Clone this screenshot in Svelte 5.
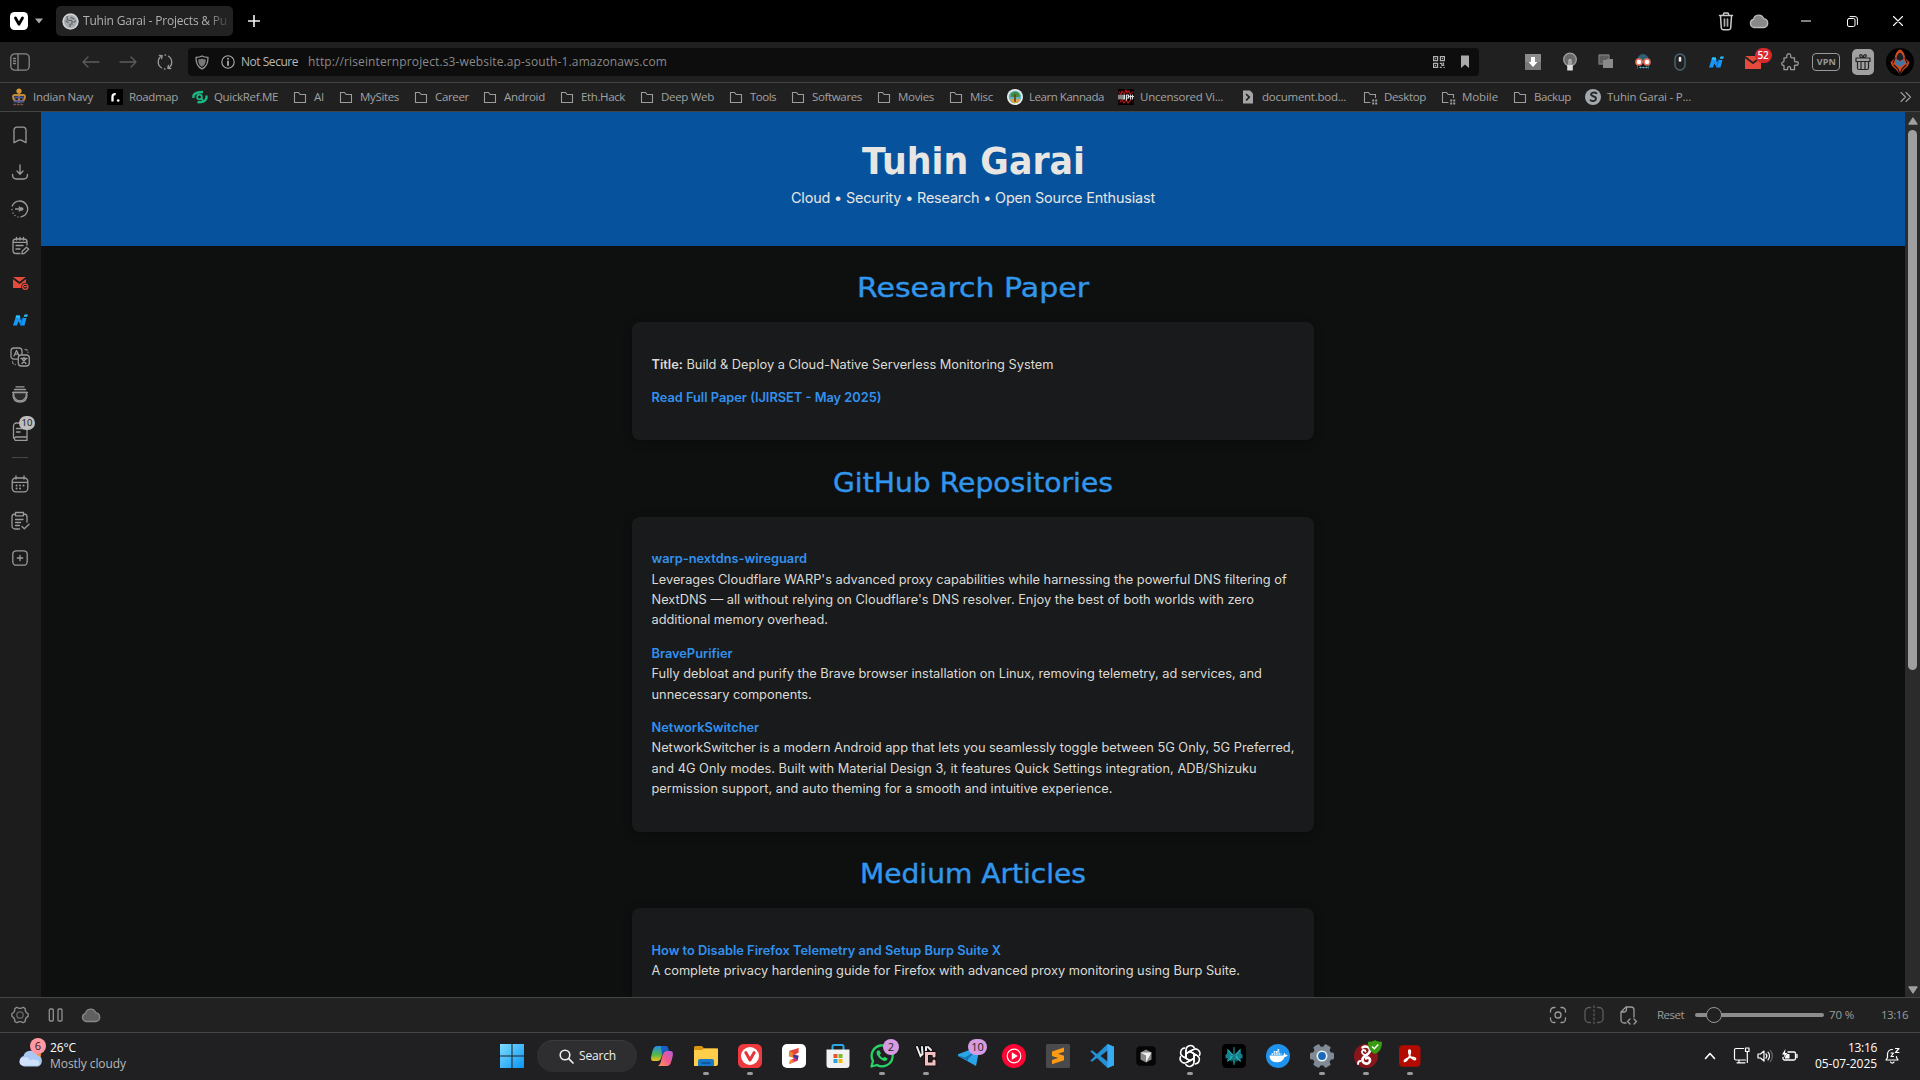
<script lang="ts">
  const svg = (w: number, h: number, body: string, extra = '') =>
    `<svg width="${w}" height="${h}" viewBox="0 0 ${w} ${h}" fill="none" stroke="currentColor" stroke-width="1.3" stroke-linecap="round" stroke-linejoin="round" style="display:block" ${extra}>${body}</svg>`;

  // Spreads a label over its given width by adjusting the tracking.
  function fit(node: HTMLElement, width: number) {
    const natural = node.getBoundingClientRect().width;
    const n = (node.textContent ?? '').length;
    node.style.letterSpacing = `${(width - natural) / n}px`;
  }

  const cloud = '<path d="M5 14.5a4.2 4.2 0 0 1-.4-8.2A5.2 5.2 0 0 1 14.6 5.6 4.5 4.5 0 0 1 15 14.5Z"';
  const swirl = '<circle cx="8" cy="8" r="8" fill="#a3a8ad" stroke="none"/><path d="M11.500 4.200C9.500 2.800 6 3.500 6 5.500s5 1.500 5 4-3.500 3.200-5.500 1.800" stroke="#26282a" stroke-width="1.900"/>';
  const folder = '<path d="M2.500 3.500h4l1.700 2h5.300v8h-11Z" stroke-width="1.1" stroke-linejoin="miter"/>';
  const speed = '<path d="M8 13.500H2.500v-10h4l1.700 2h5.300v3" stroke-width="1.1" stroke-linejoin="miter"/><path d="M10.200 10.500h2v2h-2zM13.200 10.500h2v2h-2zM10.200 13.500h2v2h-2zM13.200 13.500h2v2h-2z" fill="currentColor" stroke="none"/>';
  const nDefs = '<path d="M2 13.500 5.200 3.500h3.600l1 5L11.500 6h4l-2 7.500H9.500L7.500 9.300 6 13.500Z" fill="#1597f5" stroke="none"/><path d="M13.500 2.500h3.300l-.6 2.300h-3.400Z" fill="#27c4ff" stroke="none"/><path d="m12 5.500-2.600 8" stroke="#0d62c9" stroke-width=".9"/><path d="M5.200 3.500h3.600l.5 2.500-4.800-.6Z" fill="#27c4ff" stroke="none"/>';

  const ic: Record<string, string> = {
    vivaldi: svg(18, 18, '<rect width="18" height="18" rx="4.500" fill="#fff" stroke="none"/><path d="m5.500 6 3.400 6.200L12.500 6" stroke="#000" stroke-width="2.800"/>'),
    caret: svg(8, 6, '<path d="M0 .5h8L4 5.500Z" fill="#aaa" stroke="none"/>'),
    favicon: svg(17, 17, '<circle cx="8.500" cy="8.500" r="8.200" fill="#a7abb0" stroke="none"/><circle cx="8.500" cy="8.500" r="7.200" stroke="#d5d5d5"/><path d="M5 3.500C6 5 4 6 6 7s3-.5 4 1-1 2 0 3.500M4 8l2 1.500M9 4.500l3 1.500M12 9l1.500-1M8 11v2.500" stroke="#5c5f62" stroke-width="1.200"/>'),
    plus: svg(12, 12, '<path d="M6 .5v11M.5 6h11" stroke="#f5f5f5" stroke-width="1.600"/>'),
    trash: svg(16, 20, '<path d="M1.500 4.500h13M5.500 4.300V3a1 1 0 0 1 1-1h3a1 1 0 0 1 1 1v1.300M2.500 5l.8 12a2 2 0 0 0 2 1.800h5.400a2 2 0 0 0 2-1.800l.8-12" stroke="#ccc" stroke-width="1.500"/><path d="M6.500 8v7M9.500 8v7" stroke="#aaa" stroke-width="1.700"/>'),
    cloudTop: svg(20, 16, cloud + ' fill="#888" stroke="#bbb" stroke-width="1.400"/>'),
    min: svg(10, 2, '<path d="M0 1h10" stroke="#fff" stroke-width="1"/>'),
    restore: svg(11, 11, '<rect x=".5" y="2.500" width="7.500" height="8" rx="1.500" stroke="#fff" stroke-width="1"/><path d="M3 .6h5a2.400 2.400 0 0 1 2.400 2.400v5.500" stroke="#fff" stroke-width="1"/>'),
    close: svg(10, 10, '<path d="m.5.5 9 9m0-9-9 9" stroke="#fff" stroke-width="1.100"/>'),
    panel: svg(20, 18, '<rect x=".8" y=".8" width="18.400" height="16.400" rx="4"/><path d="M8 1v16M3.500 5.500h2M3.500 8h2M3.500 10.500h2"/>'),
    back: svg(18, 12, '<path d="M17 6H1m5-5L1 6l5 5"/>'),
    fwd: svg(18, 12, '<path d="M1 6h16m-5-5 5 5-5 5"/>'),
    reload: svg(18, 18, '<path d="M5.500 14.800A7 7 0 0 1 6 2.700M12.500 3.200A7 7 0 0 1 12 15.300M3.300 2.300 6.200 2.600 5.600 5.500M14.700 15.700l-2.900-.3.600-2.900M9 2h.6M8.400 16H9"/>'),
    shield: svg(14, 15, '<path d="M7 1c2 1.200 4 1.400 6 1.400 0 5.600-1 9-6 11.600C2 11.400 1 8 1 2.400c2 0 4-.2 6-1.400Z" stroke="#999"/><path d="M7 3.500c1.300.7 2.400.9 3.800.9C10.700 8 10 10 7 11.700 4 10 3.300 8 3.200 4.400c1.400 0 2.500-.2 3.800-.9Z" fill="#777" stroke="none"/>'),
    info: svg(14, 14, '<circle cx="7" cy="7" r="6.200" stroke="#aaa" stroke-width="1.100"/><path d="M7 6.300v4M7 3.600v.3" stroke="#ccc" stroke-width="1.500"/>'),
    qr: svg(12, 12, '<g stroke-width="1.200" stroke-linejoin="miter" stroke-linecap="butt"><path d="M.6.6h4v4h-4zM7.400.6h4v4h-4zM.6 7.400h4v4h-4z"/><path d="M2 2.600h1.200M8.800 2.600H10M2 9.400h1.200M6.800 7.400h2v2h2.500M6.800 11.400h2M10.500 6.500v2M10.500 11.500h1.300"/></g>'),
    saved: svg(10, 14, '<path d="M1 .5h8V13L5 9.500 1 13Z" fill="#aaa" stroke="none"/>'),
    dl: svg(16, 16, '<path d="M0 0h16v16H0z" fill="#777" stroke="none"/><path d="M0 0h16v8H0z" fill="#8b8b8b" stroke="none"/><path d="M6 3h4v5h2.500L8 13 3.500 8H6Z" fill="#fff" stroke="none"/>'),
    bulb: svg(16, 20, '<circle cx="8" cy="7.500" r="6.300" fill="#6a6a6a" stroke="#a0a0a0"/><path d="M5.200 13h5.600v5.500H5.200z" fill="#ddd" stroke="none"/><path d="M7 13V8.500a1 1 0 1 1 2 0V13" stroke="#ccc" stroke-width="1.100"/>'),
    tabs: svg(16, 16, '<path d="M1 1h10v9H1z" fill="#5c5c5c" stroke="#777"/><path d="M5 6h3l1-1h6v9H5z" fill="#8a8a8a" stroke="none"/>'),
    robot: svg(16, 18, '<path d="M2 8a6 7 0 0 1 12 0v8H2Z" fill="#2c6072" stroke="none"/><path d="M3 10h10v6H3z" fill="#101c22" stroke="none"/><circle cx="4" cy="9" r="3" fill="#fff" stroke="#ef7056" stroke-width="1.600"/><circle cx="12" cy="9" r="3" fill="#fff" stroke="#ef7056" stroke-width="1.600"/><path d="M5 14.500h1m2 0h1m2 0h1" stroke="#79b8c8"/>'),
    mouse: svg(12, 18, '<rect x="1" y="1" width="10" height="16" rx="5" stroke="#4a6674" stroke-width="1.400"/><path d="M6 5v2.500" stroke="#eee" stroke-width="2.600"/>'),
    n: svg(18, 16, nDefs),
    mail: svg(18, 15, '<path d="M1 1h16v13H1z" fill="#e54b3c" stroke="none"/><path d="m1 2 8 6 8-6" stroke="#222" stroke-width="1.800"/>'),
    puzzle: svg(20, 20, '<path d="M7.500 2.200c1.800-1.200 3.600.1 3.200 2.300-.2 1 .5 1.300 1.400 1.300h2.400v3c0 1 .6 1.300 1.500 1 2-.4 2.800 1 2 2.600-.6 1-1.400 1-2.400.7-.8-.2-1.100.2-1.100 1v3.600h-3c-.9 0-1-.5-.9-1.200.2-1.200-.4-1.900-1.500-1.900s-1.700.7-1.500 1.900c.1.7 0 1.200-.9 1.200H4v-3.500c0-.8-.4-1.100-1-.9-1.700-.3-1.800-2.800 0-3.200.7 0 1-.2 1-1V5.800h2c.9 0 1-.5.8-1.300-.2-1 0-1.700.7-2.300Z"/>'),
    gift: svg(22, 26, '<rect width="22" height="26" rx="5" fill="#a0a0a0" stroke="none"/><path d="M4 9h14v3.500H4zM5.500 12.500h11V19a1.500 1.500 0 0 1-1.500 1.500H7A1.500 1.500 0 0 1 5.500 19ZM9 12.500v8M13 12.500v8M11 8.500C8 8.500 7 7 8 6s2.500 0 3 2.500C11.500 6 13 5 14 6s0 2.500-3 2.500Z" stroke="#252525" stroke-width="1.200"/>'),
    avatar: svg(28, 28, '<circle cx="14" cy="14" r="14" fill="#000" stroke="none"/><path d="M14 1.500c3 1 5 5 5 8l4.500 5-2 4-3.500 3-4 5-4-5-3.500-3-2-4L9 9.500c0-3 2-7 5-8Z" fill="#d94a1f" stroke="none"/><path d="M14 4.500c2 1 3.500 3.500 3.500 6.500L14 13l-3.500-2c0-3 1.500-5.500 3.500-6.500Z" fill="#16232c" stroke="none"/><path d="m10 11.500 4 2 4-2 1 4-5 3.500-5-3.500Z" fill="#3e78a8" stroke="none"/><path d="m8 17 4 4 2 5 2-5 4-4M9 10l-2 5M19 10l2 5" stroke="#151515" stroke-width="1.200"/>'),
    navy: svg(16, 18, '<circle cx="8" cy="3" r="2.600" fill="#d99a32" stroke="none"/><path d="M3 7h10M2 8c0 4 3 5.500 6 5.500S14 12 14 8M8 5v9" stroke="#c28836" stroke-width="2"/><path d="M4 9.500h8M3.500 13.500h9" stroke="#4a57a3" stroke-width="1.800"/><path d="M3 16.500h10" stroke="#7d5348" stroke-width="1.500" stroke-dasharray="1.500 2"/>'),
    road: svg(16, 16, '<rect width="16" height="16" rx="1" fill="#000" stroke="none"/><path d="M5.500 12.500V7.800c0-2 1-2.800 3.200-2.600" stroke="#fff" stroke-width="2.300" stroke-linecap="butt"/><circle cx="11.200" cy="11.500" r="1.300" fill="#fff" stroke="none"/>'),
    quick: svg(16, 16, '<path d="M1.500 9V6.500C3 3.500 6 3 11 3M14.500 6.500V9c-1.500 4-4 4.300-9 4.300" stroke="#19b884" stroke-width="2.400" stroke-linecap="butt"/><circle cx="7.500" cy="8" r="2.400" stroke="#19b884" stroke-width="1.700"/><path d="m9 9.500 2 1.800" stroke="#19b884" stroke-width="1.700"/>'),
    folder: svg(16, 16, folder),
    speed: svg(16, 16, speed),
    kannada: svg(16, 16, '<circle cx="8" cy="8" r="8" fill="#eee" stroke="none"/><circle cx="8" cy="8" r="6.300" fill="#62b6c9" stroke="none"/><path d="M3 10h10c-1 3-2.500 4.200-5 4.200S4 13 3 10Z" fill="#d9a441" stroke="none"/><path d="M3.500 8C3 5 5 3 8 2.800S13 5 12.500 8Z" fill="#3f8f3a" stroke="none"/><path d="M8 6v6" stroke="#6d4426" stroke-width="1.800"/>'),
    uncensored: svg(16, 16, '<path d="M0 0h16v16H0z" fill="#0a0202" stroke="none"/><path d="m1 3 2 2 1-3 2 3 2-4 1 3 2-2 1 3 3-2M2 13l2-2 2 3 2-3 2 3 3-3" stroke="#b01414" stroke-width="1.200"/><path d="M1 6v4M3 10V6M5 6v4h1.500V6M8.500 11V6h2v3h-2M12.500 6v4M14.500 6v4M11.500 7.500h4" stroke="#ddd" stroke-width="1.200"/>'),
    doc: svg(16, 16, '<path d="M3 1.500h7l3 3v10H3Z" fill="#a5a5a5" stroke="none"/><path d="m6.500 5.500 2.800 2.700L6.500 11" stroke="#222" stroke-width="1.700"/>'),
    globe: svg(16, 16, swirl),
    more: svg(12, 12, '<path d="m1 1.500 4.500 4.500L1 10.500m5-9 4.500 4.500L6 10.500" stroke-width="1.100"/>'),
    s1: svg(18, 18, '<path d="M3 16.700V4a2.800 2.800 0 0 1 2.800-2.800h6.400A2.800 2.800 0 0 1 15 4v12.700l-4.300-2.300a3.500 3.500 0 0 0-3.400 0Z"/>'),
    s2: svg(18, 18, '<path d="M9 2v9M6 8l3 3.200L12 8M1.500 11.500c0 3 1.700 4.500 4 4.500h7c2.300 0 4-1.500 4-4.500"/>'),
    s3: svg(20, 20, '<path d="M2.200 7A8 8 0 1 1 11 17.900M2 10.500v.3M3 14v.3M5 16.300v.3M8 17.800v.2"/><path d="M5.500 10H11m-1.800-2L11.500 10l-2.300 2"/><circle cx="11.800" cy="10" r="1"/>'),
    s4: svg(20, 20, '<path d="M10 17.500H6A3 3 0 0 1 3 14.500V6a3 3 0 0 1 3-3h8a3 3 0 0 1 3 3v3M3 6.300h14M6.500 1.500V4M10 1.500V4M13.500 1.500V4M6 9.500h7M6 13h4M12 17.800l.3-2.500 4.200-4 2.200 2-4.200 4Z"/>'),
    s5: svg(20, 16, '<path d="M3 2h13v11H3z" fill="#e54b3c" stroke="none"/><path d="m3 3 6.500 5L16 3" stroke="#1c1c1c" stroke-width="1.600"/><circle cx="15.300" cy="11.700" r="4" fill="#1c1c1c" stroke="none"/><circle cx="15.300" cy="11.700" r="2.600" stroke="#e54b3c" stroke-width="1.200"/><path d="M14.300 11.700h2" stroke="#e54b3c"/>'),
    s7: svg(20, 20, '<path d="M8 12.200H4A3 3 0 0 1 1 9.200V4a3 3 0 0 1 3-3h5a3 3 0 0 1 3 3v3.500M4 9l2.500-5.500L9 8.500M5 7.200h3"/><rect x="8.300" y="8" width="11" height="11" rx="3"/><path d="M11 11.500h6M14 10.500v1M12 16.500l4-5M12.500 12.500l3.500 4"/><path d="M15 2.500c2 0 3 .8 3 3M2.500 14.500c0 2 1 3 3 3" stroke="#777" stroke-dasharray="2.500 2"/>'),
    s8: svg(18, 18, '<path d="M5 1.800h8M3.500 4.500h11M1.500 7.500h15M2 9.500c0 5 2.500 7.500 7 7.500s7-2.500 7-7.500" /><path d="M2.500 7.500h13c0 5-2 8.500-6.500 8.500s-6.500-3.500-6.500-8.500Z" fill="#2b2b2b"/>'),
    s9: svg(18, 20, '<path d="M16 16H4.500a2 2 0 0 0 0 3.500H16M2.500 17V5a3 3 0 0 1 3-3H14a2 2 0 0 1 2 2v15.500M5.500 7.500H12M5.500 11H9" />'),
    s10: svg(18, 18, '<rect x="1.200" y="3" width="15.600" height="13.800" rx="3.500"/><path d="M1.500 7.300h15M5 1v3M13 1v3"/><path d="M5.500 10.500h.1M9 10.500h.1M12.500 10.500h.1M5.500 13.500h.1M9 13.500h.1" stroke-width="1.800"/>'),
    s11: svg(20, 20, '<path d="M9.500 18H5a3 3 0 0 1-3-3V6a3 3 0 0 1 3-3M14 3a3 3 0 0 1 3 3v5M5.500 1.500h8v3.300h-8zM5.500 8.500H13M5.500 11.500h5M5.500 14.500h4M12 15.500l2.300 2.300 4.700-4.500"/>'),
    s12: svg(16, 16, '<rect x=".8" y=".8" width="14.400" height="14.400" rx="3.500"/><path d="M8 5.300v5.400M5.300 8h5.400"/>'),
    gear: svg(18, 18, '<path d="M5.800 1.300c2 1.400 4.400 1.400 6.400 0l2 1.300c-.2 2.400.6 4 2.900 5v2.800c-2.300 1-3.100 2.600-2.900 5l-2 1.300c-2-1.400-4.400-1.400-6.400 0l-2-1.300c.2-2.400-.6-4-2.900-5V7.600c2.300-1 3.100-2.600 2.900-5Z"/><circle cx="9" cy="9" r="3.200" stroke="#666"/>'),
    pause: svg(16, 14, '<rect x="1.300" y="1" width="4" height="12" rx="1"/><rect x="10" y="1" width="4" height="12" rx="1"/>'),
    cloudSt: svg(20, 16, cloud + ' fill="#606060" stroke="#888"/>'),
    capture: svg(18, 18, '<path d="M1.500 6V5A3.500 3.500 0 0 1 5 1.500h1M12 1.500h1A3.500 3.500 0 0 1 16.500 5v1M16.500 12v1a3.500 3.500 0 0 1-3.500 3.500h-1M6 16.500H5A3.500 3.500 0 0 1 1.500 13v-1"/><circle cx="9" cy="9" r="3"/>'),
    tile: svg(20, 20, '<path d="M6.500 2.500H5A4 4 0 0 0 1 6.500v7a4 4 0 0 0 4 4h1.500M13.500 2.500H15a4 4 0 0 1 4 4v7a4 4 0 0 1-4 4h-1.500"/><path d="M10 1v18" stroke-dasharray="1.500 2.500"/>'),
    actions: svg(18, 19, '<path d="M6 17H4a3 3 0 0 1-3-3V6l5-5h5a3 3 0 0 1 3 3v7M1.500 6H4a2.500 2.500 0 0 0 2.500-2.500V1M10 13l-2.500 2.500L10 18M14 13l2.500 2.500L14 18"/>'),
    win: svg(24, 24, '<defs><linearGradient id="w" x1="0" y1="0" x2="1" y2="1"><stop stop-color="#7ddcff"/><stop offset="1" stop-color="#0a95f5"/></linearGradient></defs><path d="M0 0h11.500v11.500H0zM12.500 0H24v11.500H12.500zM0 12.500h11.500V24H0zM12.500 12.500H24V24H12.500z" fill="url(#w)" stroke="none"/>'),
    search: svg(15, 15, '<circle cx="6" cy="6" r="4.800" stroke="#eee" stroke-width="1.600"/><path d="m9.700 9.700 4.300 4.300" stroke="#eee" stroke-width="1.700"/>'),
    copilot: svg(24, 24, '<defs><linearGradient id="c1" x1="0" y1="0" x2="0" y2="1"><stop stop-color="#1e8ee6"/><stop offset=".6" stop-color="#58b847"/><stop offset="1" stop-color="#f2c21a"/></linearGradient><linearGradient id="c2" x1="1" y1="0" x2="0" y2="1"><stop stop-color="#b55be0"/><stop offset=".5" stop-color="#ee5b8c"/><stop offset="1" stop-color="#ff9a55"/></linearGradient></defs><path d="M7 2h9c-2 1-2.500 3-3.500 7-1.200 5-2 8-5 8H4c-3 0-3.500-2-2.500-6C2.800 6 3.500 2 7 2Z" fill="url(#c1)" stroke="none"/><path d="M17 22H8c2-1 2.500-3 3.500-7 1.200-5 2-8 5-8H20c3 0 3.500 2 2.500 6-1.300 5-2 9-5.500 9Z" fill="url(#c2)" stroke="none"/><path d="M11 2h5c2 0 2.500 3 3 5h-3c-2 0-3 1-4 4Z" fill="#1660c8" stroke="none"/>'),
    explorer: svg(24, 24, '<path d="M0 3.500A1.500 1.500 0 0 1 1.500 2H8l2 2.500h12a2 2 0 0 1 2 2V12H0Z" fill="#d89510" stroke="none"/><path d="M0 6h8l2-1.500h14V20a2 2 0 0 1-2 2H0Z" fill="#ffce4a" stroke="none"/><path d="M4 22v-5a2 2 0 0 1 2-2h12a2 2 0 0 1 2 2v5Z" fill="#1a78c8" stroke="none"/><path d="M8 19h8" stroke="#0c4f92"/>'),
    viv2: svg(24, 24, '<rect width="24" height="24" rx="5.500" fill="#ee3a3e" stroke="none"/><circle cx="12" cy="12" r="9" fill="#fff" stroke="none"/><path d="m7.800 8.500 4.200 7.500 4.200-7.500" stroke="#e5343a" stroke-width="3"/>'),
    sapp: svg(24, 24, '<rect width="24" height="24" rx="5" fill="#fff" stroke="none"/><path d="m16.800 4-9.300 2.800-.7 3.700 5.200 1 4.500-3Z" fill="#e4473e" stroke="none"/><path d="M7.500 6.800 6.800 12.500l5 1.500 1.500-3Z" fill="#e88a2c" stroke="none"/><path d="m10.500 10.500 6 1.200-.8 5L7.500 20l.3-3.500 4-2Z" fill="#d5326e" stroke="none"/><path d="m11 10.500 5.500 1.200-.8 4.300-4.200-3Z" fill="#4038a0" stroke="none"/><path d="m7.500 20 .5-4.500 4.500 1.500Z" fill="#f3922e" stroke="none"/>'),
    store: svg(24, 24, '<path d="M6.500 7V2.500A1.500 1.500 0 0 1 8 1h8a1.500 1.500 0 0 1 1.500 1.500V7" stroke="#28a9e8" stroke-width="2"/><path d="M.5 5.500h23V21a3 3 0 0 1-3 3h-17a3 3 0 0 1-3-3Z" fill="#f1f1f1" stroke="none"/><path d="M7.500 10H11.500v4h-4z" fill="#e9542b" stroke="none"/><path d="M12.500 10h4v4h-4z" fill="#7db928" stroke="none"/><path d="M7.500 15h4v4h-4z" fill="#2aa2e6" stroke="none"/><path d="M12.500 15h4v4h-4z" fill="#f8b70c" stroke="none"/>'),
    whatsapp: svg(24, 24, '<path d="M1.500 22.500 3 17a10.500 10.500 0 1 1 4 4Z" stroke="#27d366" stroke-width="2.300"/><path d="M7.500 6.500c-2 2-.5 5 2 7.500s5.500 4 7.500 2l.5-1.500-3-1.800-1.500 1.300c-1.500-.6-2.800-2-3.300-3.300L11 9.500 9.300 6.300Z" fill="#27d366" stroke="none"/>'),
    vc: svg(24, 24, '<path d="m3 3 3.500 9 1.500-1.500V3M12 3v5l5-1-3-4" stroke="#0c0c0c" stroke-width="4"/><path d="m3 3 3.500 9L8.500 10 8 3M12 3v5M14 3l3 3" stroke="#eee" stroke-width="2" stroke-linejoin="miter"/><path d="M20 12V9.500h-7.500v10.500H20V17" stroke="#1c0f0f" stroke-width="5" stroke-linejoin="miter"/><path d="M20 12V9.500h-7.500v10.500H20V17" stroke="#efc1c1" stroke-width="3" stroke-linejoin="miter"/>'),
    telegram: svg(24, 24, '<path d="M-2 11 22 2l-4 20-8-4.500Z" fill="#2aa6e8" stroke="none"/><path d="m-2 11 9 2.500L19 6l-9 9v2l-4-2.500Z" fill="#1672b0" stroke="none"/>'),
    ytm: svg(24, 24, '<circle cx="12" cy="12" r="12" fill="#ff0534" stroke="none"/><circle cx="12" cy="12" r="6.800" stroke="#fff" stroke-width="1.200"/><path d="m9.800 8.300 6 3.700-6 3.700Z" fill="#fff" stroke="none"/>'),
    sublime: svg(24, 24, '<rect width="24" height="24" rx="1.500" fill="#4a4a4a" stroke="none"/><path d="M18 3.500v4.300l-6 2 6 2v4.400L6 20.300V16l6.200-2L6 12V7.500Z" fill="#ff9a12" stroke="none"/>'),
    vscode: svg(24, 24, '<path d="M17.500 0 24 2.800v18.400L17.500 24 7 14l-5 3.800L.3 16.700 5 12 .3 7.300 2 6.200 7 10Zm0 6.500L10.500 12l7 5.500Z" fill="#2490d8" fill-rule="evenodd" stroke="none"/><path d="M17.500 0 24 2.800v18.400L17.500 24Z" fill="#37aaf2" stroke="none"/>'),
    cursor: svg(24, 24, '<rect x="2.300" y="2.300" width="19.500" height="19.500" rx="4" fill="#050505" stroke="none"/><path d="m12 5.500 5.500 3v7L12 18.500l-5.500-3v-7Z" fill="#888" stroke="none"/><path d="M6.500 8.500h11L12 18.500v-7Z" fill="#eee" stroke="none"/>'),
    gpt: svg(24, 24, Array.from({ length: 6 }, (_, i) => `<path transform="rotate(${i * 60} 12 12)" d="M8 14.300V6a4.500 4.500 0 0 1 8.200-2.500M8 9.700l4-2.300 6.800 3.900" stroke="#fff" stroke-width="1.500"/>`).join('')),
    perp: svg(24, 24, '<rect width="24" height="24" rx="4.500" fill="#000" stroke="none"/><path d="M11.500 10.500 5.500 4.500 5 10 3.500 10.500v4L5.500 14l-.5 4 5-3 1.500 5ZM12.500 10.500l6-6 .5 5.500 1.500.5v4l-2-.5.5 4-5-3-1.500 5Z" fill="#16808c" stroke="none"/><path d="M12 3.500v17M10.500 11 6 6M13.500 11 18 6M10 12.500 6 17M14 12.500l4 4.500M9 12v5M15 12v5" stroke="#2bbbc6" stroke-width=".9"/>'),
    docker: svg(24, 24, '<circle cx="12" cy="12" r="12" fill="#1f92ee" stroke="none"/><path d="M3.500 11.500h14c0-1.300.3-2 1-2.600.8.600 1 1.200 1.100 2 .8-.2 1.500 0 2 .3-.8 1.500-1.600 1.600-3 1.700-1.500 4-4.600 5.300-8 5.300-4.600 0-7.100-2.200-7.100-6.700Z" fill="#fff" stroke="none"/><path d="M5.500 10h10M7.700 7.800h5.600M11.500 5.800h2" stroke="#fff" stroke-width="1.700" stroke-dasharray="1.700 .6" stroke-linecap="butt"/>'),
    settings: svg(24, 24, '<g fill="#7f8a94" stroke="none"><circle cx="12" cy="12" r="9.500"/>' + [0, 60, 120].map((a) => `<rect x="8.500" y="0" width="7" height="24" rx="1.500" transform="rotate(${a + 30} 12 12)"/>`).join('') + '</g><circle cx="12" cy="12" r="5.500" fill="#eef3f7" stroke="none"/><circle cx="12" cy="12" r="3.900" fill="#1c67b8" stroke="none"/>'),
    wire: svg(24, 24, '<circle cx="12" cy="12" r="12" fill="#8a151b" stroke="none"/><path d="M8.500 3.500c3-2 7-.5 7.500 2.500.3 3-2 4-4.500 5.500s-3.500 2.500-3 5c.5 3 5.500 4.500 7 1.500s-1-5.500-3.500-3.500" stroke="#fff" stroke-width="2.600"/><path d="M13 11c-3 0-5.500-1-5-3.500.5-2 3-2 3.500 0M4 20c0-2 1-3 2.500-3" stroke="#fff" stroke-width="1.800"/>'),
    acrobat: svg(24, 24, '<rect x="1" y="1.200" width="21.500" height="21.500" rx="4" fill="#b30b00" stroke="none"/><path d="M11.500 6c1.500 0 1 4-.5 7s-3.500 5-4.500 4.500S8 14 12 13.500s6 .5 5.500 1.700-4-.2-5.500-3.200-1.800-6-.5-6Z" stroke="#fff" stroke-width="1.500"/>'),
    weather: svg(26, 18, '<circle cx="18" cy="6" r="5" fill="#ff8a1f" stroke="none"/><path d="M6 17.500A5.500 5.500 0 0 1 5.500 7 7.200 7.200 0 0 1 19 6a6 6 0 0 1 1 11.500Z" fill="#a9c8f4" stroke="none"/><path d="M5 16.500a4 4 0 0 1 1-8c4-1 5 1 6 3 2-2 8-1 9 1s0 4-2 4Z" fill="#cfe1fb" stroke="none"/>'),
    up: svg(12, 8, '<path d="m1.500 6.500 4.500-5 4.500 5" stroke="#fff" stroke-width="1.600"/>'),
    monitor: svg(17, 17, '<path d="M10.500 1.500H3A1.500 1.500 0 0 0 1.500 3v8.500A1.500 1.500 0 0 0 3 13h9.500M6 13v2.800M4 15.800h8M12.500 1h3.500v3.500h-3.500zM14.300 4.500v11" stroke="#fff" stroke-width="1.200"/>'),
    sound: svg(17, 14, '<path d="M1 5v4h2.500L7 12V2L3.500 5Z" stroke="#fff" stroke-width="1.200"/><path d="M9 5a3 3 0 0 1 0 4M11 3.200a5.500 5.500 0 0 1 0 7.600" stroke="#fff" stroke-width="1.200"/><path d="M13.200 1.500a8 8 0 0 1 0 11" stroke="#666" stroke-width="1.200"/>'),
    battery: svg(17, 14, '<path d="M7 3h6a1.500 1.500 0 0 1 1.500 1.500v5A1.500 1.500 0 0 1 13 11H3.500A1.500 1.500 0 0 1 2 9.500V8.500M16 5.500v3" stroke="#fff" stroke-width="1.300"/><path d="M4.500 0 1 5.500h2.500L2.500 9 6.500 4H4ZM4 8 6 5h2.500v4.500H4Z" fill="#fff" stroke="none"/>'),
    bell: svg(17, 17, '<path d="M8.500 2.500A4.800 4.800 0 0 0 3.500 7v3.500L2 13h12l-1.500-2.500V9.500M6.500 15a2 2 0 0 0 3.500 0M11.500 1.500h3.500l-3.500 4H15M7 6h2.500L7 9.500h2.500" stroke="#fff" stroke-width="1.200"/>'),
    arrowUp: svg(10, 8, '<path d="M1 7 5 1l4 6Z" fill="#a0a0a0" stroke="#a0a0a0"/>'),
    arrowDown: svg(10, 8, '<path d="m1 1 4 6 4-6Z" fill="#a0a0a0" stroke="#a0a0a0"/>'),
  };

  const bookmarks: [string, string, number, number][] = [
    // icon, label, label width, space after
    ['navy', 'Indian Navy', 60, 14], ['road', 'Roadmap', 49, 14], ['quick', 'QuickRef.ME', 64, 14],
    ['folder', 'AI', 10, 14], ['folder', 'MySites', 39, 14], ['folder', 'Career', 34, 13], ['folder', 'Android', 41, 14],
    ['folder', 'Eth.Hack', 44, 14], ['folder', 'Deep Web', 53, 14], ['folder', 'Tools', 26, 14], ['folder', 'Softwares', 50, 14],
    ['folder', 'Movies', 36, 14], ['folder', 'Misc', 23, 14], ['kannada', 'Learn Kannada', 75, 14],
    ['uncensored', 'Uncensored Vi...', 83, 17], ['doc', 'document.bod...', 84, 16], ['speed', 'Desktop', 42, 14],
    ['speed', 'Mobile', 36, 14], ['folder', 'Backup', 37, 14], ['globe', 'Tuhin Garai - P...', 84, 0],
  ];
  const extensions = ['dl', 'bulb', 'tabs', 'robot', 'mouse', 'n', 'mail', 'puzzle', 'vpn', 'gift', 'avatar'];
  const panelTop = ['s1', 's2', 's3', 's4', 's5', 'n', 's7', 's8', 's9'];
  const panelBottom = ['s10', 's11', 's12'];
  const apps: [string, boolean, string?][] = [
    ['copilot', false], ['explorer', true], ['viv2', true], ['sapp', false], ['store', false], ['whatsapp', true, '2'],
    ['vc', true], ['telegram', false, '10'], ['ytm', false], ['sublime', false], ['vscode', false], ['cursor', false],
    ['gpt', true], ['perp', false], ['docker', false], ['settings', true], ['wire', true, 'ok'], ['acrobat', true],
  ];
  const repos = [
    ['warp-nextdns-wireguard', "Leverages Cloudflare WARP's advanced proxy capabilities while harnessing the powerful DNS filtering of NextDNS — all without relying on Cloudflare's DNS resolver. Enjoy the best of both worlds with zero additional memory overhead."],
    ['BravePurifier', 'Fully debloat and purify the Brave browser installation on Linux, removing telemetry, ad services, and unnecessary components.'],
    ['NetworkSwitcher', 'NetworkSwitcher is a modern Android app that lets you seamlessly toggle between 5G Only, 5G Preferred, and 4G Only modes. Built with Material Design 3, it features Quick Settings integration, ADB/Shizuku permission support, and auto theming for a smooth and intuitive experience.'],
  ];
</script>

{#snippet heading(label: string, width: number)}
  <h2>
    <svg {width} height="34" viewBox="0 0 {width} 34">
      <text x="0" y="26" textLength={width} lengthAdjust="spacingAndGlyphs">{label}</text>
    </svg>
  </h2>
{/snippet}

<div class="screen">
  <header class="tabs">
    <span class="logo">{@html ic.vivaldi}</span>
    <span class="caret">{@html ic.caret}</span>
    <div class="tab">
      {@html ic.favicon}
      <span class="tabname"><span use:fit={144}>Tuhin Garai - Projects &amp; Pu</span></span>
    </div>
    <span class="newtab">{@html ic.plus}</span>
    <div class="wincells">
      <span class="small">{@html ic.trash}</span>
      <span class="small">{@html ic.cloudTop}</span>
      <span class="big">{@html ic.min}</span>
      <span class="big">{@html ic.restore}</span>
      <span class="big">{@html ic.close}</span>
    </div>
  </header>

  <div class="toolbar">
    <span class="paneltoggle">{@html ic.panel}</span>
    <div class="nav">
      <span class="dim">{@html ic.back}</span>
      <span class="dim">{@html ic.fwd}</span>
      <span>{@html ic.reload}</span>
    </div>
    <div class="address">
      {@html ic.shield}
      <span class="info">{@html ic.info}</span>
      <span class="secure"><span use:fit={57}>Not Secure</span></span>
      <span class="url"><span use:fit={359}>http://riseinternproject.s3-website.ap-south-1.amazonaws.com</span></span>
      <span class="qr">{@html ic.qr}</span>
      <span class="saved">{@html ic.saved}</span>
    </div>
    <div class="extensions">
      {#each extensions as e}
        <span class="cell">
          {#if e === 'vpn'}<span class="vpn">VPN</span>{:else}{@html ic[e]}{/if}
          {#if e === 'mail'}<span class="mailbadge">52</span>{/if}
        </span>
      {/each}
    </div>
  </div>

  <nav class="bookmarks">
    {#each bookmarks as [icon, label, width, after]}
      <span class="bookmark" style="margin-right:{after}px">
        {@html ic[icon]}
        <span class="bname" style="width:{width}px"><span use:fit={width}>{label}</span></span>
      </span>
    {/each}
    <span class="more">{@html ic.more}</span>
  </nav>

  <div class="middle">
    <aside>
      {#each panelTop as p}
        <span class="pcell">{@html ic[p]}{#if p === 's9'}<span class="count">10</span>{/if}</span>
      {/each}
      <span class="sep"></span>
      {#each panelBottom as p}
        <span class="pcell">{@html ic[p]}</span>
      {/each}
    </aside>

    <main>
      <section class="hero">
        <h1>
          <svg width="223" height="40" viewBox="0 0 223 40">
            <text x="0" y="33" textLength="223" lengthAdjust="spacingAndGlyphs">Tuhin Garai</text>
          </svg>
        </h1>
        <p><span use:fit={364}>Cloud • Security • Research • Open Source Enthusiast</span></p>
      </section>

      {@render heading('Research Paper', 232)}
      <article>
        <p><strong>Title:</strong> Build &amp; Deploy a Cloud-Native Serverless Monitoring System</p>
        <p><a href="#paper">Read Full Paper (IJIRSET - May 2025)</a></p>
      </article>

      {@render heading('GitHub Repositories', 280)}
      <article>
        {#each repos as [name, about]}
          <p><a href="#{name}">{name}</a><br />{about}</p>
        {/each}
      </article>

      {@render heading('Medium Articles', 226)}
      <article>
        <p>
          <a href="#firefox">How to Disable Firefox Telemetry and Setup Burp Suite X</a><br />
          A complete privacy hardening guide for Firefox with advanced proxy monitoring using Burp Suite.
        </p>
      </article>
    </main>

    <div class="scrollbar">
      {@html ic.arrowUp}
      <span class="thumb"></span>
      {@html ic.arrowDown}
    </div>
  </div>

  <div class="status">
    <span class="st40">{@html ic.gear}</span>
    <span class="st32">{@html ic.pause}</span>
    <span class="st38">{@html ic.cloudSt}</span>
    <div class="stright">
      <span class="st35">{@html ic.capture}</span>
      <span class="st35 faint">{@html ic.tile}</span>
      <span class="st35">{@html ic.actions}</span>
      <span class="reset"><span use:fit={27}>Reset</span></span>
      <span class="slider"><span class="knob"></span></span>
      <span class="zoom"><span use:fit={25}>70 %</span></span>
      <span class="clock"><span use:fit={27}>13:16</span></span>
    </div>
  </div>

  <footer>
    <div class="weather">
      <span class="wicon">{@html ic.weather}<span class="wbadge">6</span></span>
      <span class="wtext">
        <span class="temp"><span use:fit={26}>26°C</span></span>
        <span class="cond"><span use:fit={76}>Mostly cloudy</span></span>
      </span>
    </div>
    <div class="dock">
      <span class="start">{@html ic.win}</span>
      <span class="searchbox">{@html ic.search}<span use:fit={37}>Search</span></span>
      {#each apps as [name, running, badge]}
        <span class="app">
          {@html ic[name]}
          {#if running}<span class="dot"></span>{/if}
          {#if badge === 'ok'}
            <span class="okbadge">
              <svg width="14" height="14" viewBox="0 0 14 14"><path d="M7 0c2 1.500 4.500 1.800 7 1.800C14 8 12 12 7 14 2 12 0 8 0 1.800 2.500 1.800 5 1.500 7 0Z" fill="#399b12" /><path d="m4 6.500 2.300 2.300L10.300 4.500" fill="none" stroke="#fff" stroke-width="1.400" /></svg>
            </span>
          {:else if badge}<span class="badge" class:wide={badge.length > 1}>{badge}</span>{/if}
        </span>
      {/each}
    </div>
    <div class="tray">
      <span class="t-up">{@html ic.up}</span>
      {@html ic.monitor}
      {@html ic.sound}
      {@html ic.battery}
      <span class="datetime"><span><span use:fit={29}>13:16</span></span><span><span use:fit={62}>05-07-2025</span></span></span>
      {@html ic.bell}
    </div>
  </footer>
</div>

<style>
  :global(body) { background: #000; overflow: hidden; }
  .screen { width: 1920px; height: 1080px; display: flex; flex-direction: column; overflow: hidden; background: #202020; color: #9c9c9c; font: 11.5px/16px "Open Sans", "Noto Sans", sans-serif; white-space: nowrap; }
  .screen * { box-sizing: border-box; }

  .tabs { height: 42px; flex: none; background: #000; display: flex; align-items: center; }
  .logo { margin-left: 10px; }
  .caret { margin-left: 7px; }
  .tab { margin-left: 13px; width: 177px; height: 30px; border-radius: 5px; background: #222; display: flex; align-items: center; padding: 0 4px 0 6px; gap: 4px; color: #b0b0b0; font-size: 12px; }
  .tabname { flex: 1; mask-image: linear-gradient(90deg, #000 84%, rgba(0, 0, 0, .15)); }
  .newtab { margin-left: 15px; }
  .wincells { margin-left: auto; display: flex; align-items: center; }
  .wincells span { display: flex; justify-content: center; }
  .small { width: 33px; }
  .small:nth-child(2) { width: 33px; margin-right: 8px; }
  .big { width: 46px; }
  .big:last-child { margin-right: -1px; }

  .toolbar { height: 40px; flex: none; display: flex; align-items: center; color: #999; }
  .paneltoggle { width: 40px; display: flex; justify-content: center; color: #888; }
  .nav { margin-left: 32px; display: flex; }
  .nav span { width: 37px; display: flex; justify-content: center; align-items: center; }
  .nav .dim { color: #5c5c5c; }
  .address { margin-left: 5px; width: 1291px; height: 28px; background: #0d0d0d; border-radius: 4px; display: flex; align-items: center; padding: 0 7px; font-size: 12px; }
  .info { margin-left: 12px; }
  .secure { margin-left: 6px; width: 67px; color: #b8b8b8; }
  .url { color: #8a8a8a; }
  .qr { margin-left: auto; color: #b0b0b0; }
  .saved { margin-left: 15px; }
  .saved, .qr { display: flex; }
  .saved { margin-right: 2px; }
  .extensions { margin-left: 35.5px; display: flex; }
  .cell { width: 36.7px; height: 28px; display: flex; align-items: center; justify-content: center; position: relative; }
  .vpn { width: 28px; height: 18px; border: 1.3px solid #999; border-radius: 4px; font: 700 9px/15px "Open Sans", sans-serif; text-align: center; letter-spacing: .2px; }
  .mailbadge { position: absolute; left: 20px; top: 0; width: 17px; height: 15px; border-radius: 8px; background: #d9282e; color: #fff; font: 600 10px/15px "Open Sans", sans-serif; text-align: center; }

  .bookmarks { height: 30px; flex: none; border-top: 1px solid #444; border-bottom: 1px solid #444; display: flex; align-items: center; padding-left: 11px; }
  .bookmark { display: flex; align-items: center; gap: 6px; }
  .bname { display: block; color: #a2a2a2; }
  .more { margin-left: auto; margin-right: 8px; }

  .middle { flex: 1; min-height: 0; display: flex; }
  aside { width: 41px; background: #1c1c1c; padding-top: 4px; display: flex; flex-direction: column; align-items: flex-start; color: #9a9a9a; }
  .pcell { width: 40px; height: 37px; flex: none; display: flex; align-items: center; justify-content: center; position: relative; }
  .sep { width: 16px; height: 1px; background: #444; margin: 8px 0 7px 12px; flex: none; }
  .count { position: absolute; left: 19px; top: 4px; width: 16px; height: 14px; border-radius: 7px; background: #bdbdbd; color: #111; font: 9.5px/14px "Open Sans", sans-serif; text-align: center; }

  main { flex: 1; background: #0e100f; overflow: hidden; display: flex; flex-direction: column; align-items: center; font: 12.8px/20.48px Inter, sans-serif; color: #dcdad6; white-space: normal; }
  .hero { width: 100%; height: 134px; flex: none; background: #07529d; display: flex; flex-direction: column; align-items: center; }
  h1, h2 { margin: 0; flex: none; }
  h1 { margin-top: 29px; height: 40px; }
  h1 svg, h2 svg { display: block; overflow: visible; }
  h1 text { font: 700 38px "DejaVu Sans", sans-serif; fill: #e8e6e3; }
  .hero p { margin: 5px 0 0; font-size: 14.4px; line-height: 24px; color: #e8e6e3; white-space: nowrap; }
  h2 { height: 34px; margin: 25.4px 0 17px; }
  h2 text { font: 400 26px "DejaVu Sans", sans-serif; fill: #3196ec; stroke: #3196ec; stroke-width: .4px; }
  article { width: 682px; flex: none; background: #181a1b; border-radius: 8px; padding: 32.2px 19.2px 32.1px 19.5px; box-shadow: 0 2px 8px rgba(0, 0, 0, .35); }
  article p { margin: 0 0 12.8px; }
  article p:last-child { margin: 0; }
  a { color: #3391ee; font-weight: 600; text-decoration: none; }
  strong { font-weight: 600; }

  .scrollbar { width: 15px; background: #2b2b2b; display: flex; flex-direction: column; align-items: center; padding: 5px 0 3px; }
  .thumb { width: 9px; height: 540px; border-radius: 5px; background: #9f9f9f; margin: 5px 0 auto; }

  .status { height: 35px; flex: none; background: #212121; border-top: 1px solid #454545; display: flex; align-items: center; color: #8f8f8f; }
  .status > span, .stright > span { display: flex; justify-content: center; align-items: center; }
  .st40 { width: 40px; }
  .st32 { width: 32px; }
  .st38 { width: 38px; }
  .st35 { width: 35.5px; }
  .faint { color: #5c5c5c; }
  .stright { margin-left: auto; display: flex; align-items: center; color: #9c9c9c; }
  .stright .reset { width: 27px; margin-left: 10px; }
  .slider { width: 129px; height: 4px; border-radius: 2px; background: #8e8c8c; margin: 0 5px 0 11px; position: relative; }
  .knob { position: absolute; left: 11px; top: -6px; width: 16px; height: 16px; border-radius: 50%; background: #212121; border: 1px solid #999; }
  .stright .zoom { width: 25px; }
  .stright .clock { width: 27px; margin: 0 12px 0 27px; }

  footer { height: 48px; flex: none; background: #202022; border-top: 1px solid #454545; display: flex; align-items: center; padding-bottom: 2px; color: #fff; }
  .weather { display: flex; align-items: center; padding-left: 18px; width: 493px; gap: 6px; }
  .wicon { position: relative; padding-top: 5px; }
  .wbadge { position: absolute; left: 12px; top: -6px; width: 16px; height: 16px; border-radius: 50%; background: #ff98a3; color: #3a1418; font-size: 11px; line-height: 16px; text-align: center; }
  .wtext { display: flex; flex-direction: column; line-height: 16px; font-size: 12px; padding-top: 1px; }
  .cond { color: #b8b8b8; }
  .dock { display: flex; align-items: center; height: 46px; }
  .start { width: 37px; display: flex; justify-content: center; }
  .searchbox { margin: 0 3px 0 7px; width: 100px; height: 32px; border-radius: 16px; background: #2e2e30; border-top: 1px solid #3b3b3d; display: flex; align-items: center; gap: 5px; padding-left: 22px; font-size: 12px; color: #f0f0f0; }
  .app { width: 44px; height: 46px; display: flex; align-items: center; justify-content: center; position: relative; }
  .dot { position: absolute; left: 19px; bottom: 4px; width: 6px; height: 3px; border-radius: 2px; background: #999; }
  .badge { position: absolute; left: 23px; top: 6px; width: 16px; height: 16px; border-radius: 8px; background: #d79be3; color: #221; font-size: 11px; line-height: 16px; text-align: center; }
  .badge.wide { left: 20px; width: 19px; }
  .okbadge { position: absolute; left: 24px; top: 7px; height: 14px; line-height: 0; }
  .tray { margin-left: auto; display: flex; align-items: center; gap: 7px; padding-right: 19px; }
  .t-up { margin-right: 10px; }
  .datetime { display: flex; flex-direction: column; align-items: flex-end; line-height: 16px; font-size: 12px; width: 72px; }
</style>
